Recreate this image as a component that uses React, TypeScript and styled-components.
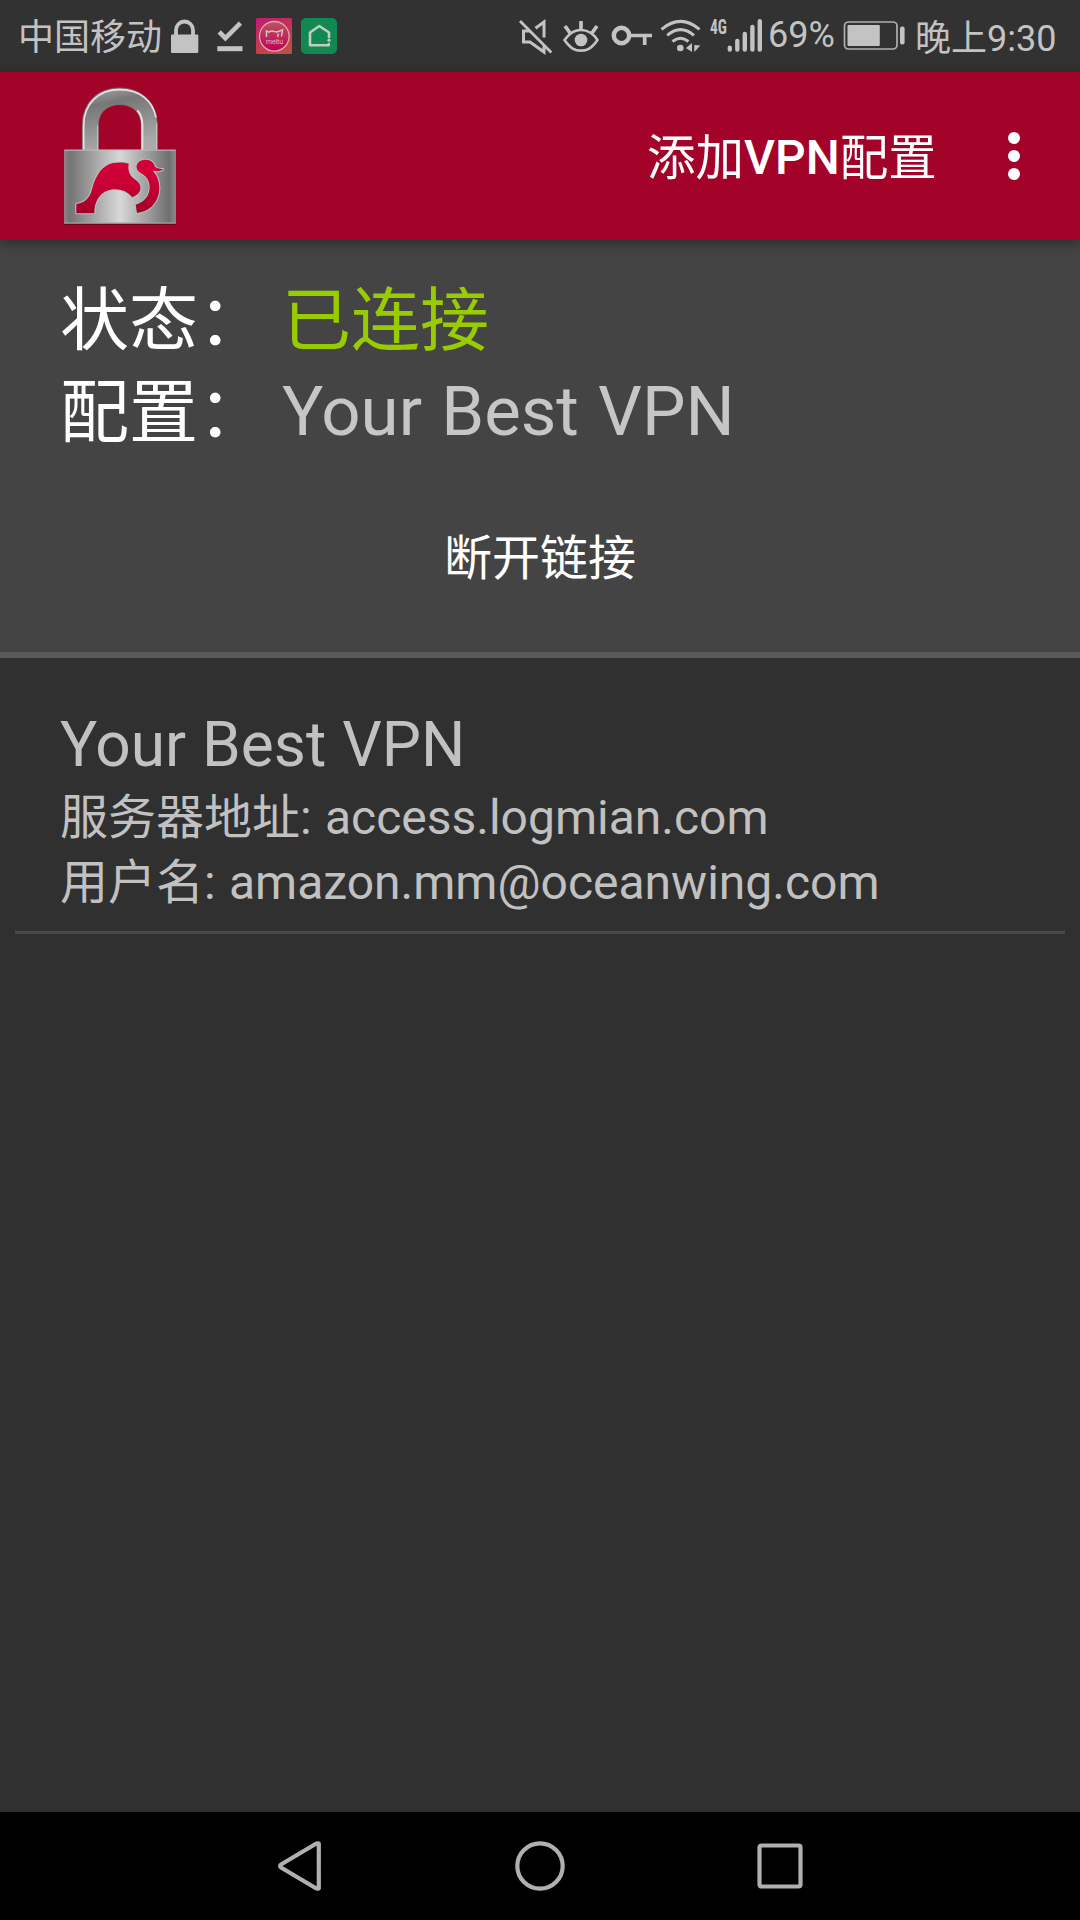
import React from "react";
import styled, { createGlobalStyle } from "styled-components";

const GlobalStyle = createGlobalStyle`
  * { box-sizing: border-box; }
  body {
    margin: 0;
    background: #303030;
    font-family: Roboto, "Noto Sans CJK SC", sans-serif;
  }
`;

const Screen = styled.div`
  width: 1080px;
  height: 1920px;
  display: flex;
  flex-direction: column;
  background: #303030;
  overflow: hidden;
`;

const StatusBar = styled.header`
  height: 72px;
  flex: none;
  display: flex;
  align-items: flex-start;
  background: #323232;
  color: #c3c3c3;
`;

const StatusText = styled.span<{ $w: number; $left: number; $top: number; $size: number }>`
  flex: none;
  width: ${(p) => p.$w}px;
  margin-left: ${(p) => p.$left}px;
  margin-top: ${(p) => p.$top}px;
  font-size: ${(p) => p.$size}px;
  line-height: 42px;
  white-space: nowrap;
`;

const NetworkLabel = styled.span`
  flex: none;
  width: 17px;
  margin: 17px 0 0 8px;
  font: 700 21px/20px "Roboto Condensed", Roboto, sans-serif;
  white-space: nowrap;
  transform: scaleX(0.74);
  transform-origin: left;
`;

const Glyph = styled.svg<{ $left?: number; $top?: number }>`
  flex: none;
  display: block;
  margin-left: ${(p) => p.$left ?? 0}px;
  margin-top: ${(p) => p.$top ?? 0}px;
`;

const AppBar = styled.div`
  height: 168px;
  flex: none;
  display: flex;
  align-items: flex-start;
  background: #a30229;
  box-shadow: 0 3px 12px rgba(0, 0, 0, 0.38);
  z-index: 1;
  color: #fff;
`;

const AddAction = styled.button`
  margin: 58px 0 0 auto;
  width: 289px;
  padding: 0;
  border: 0;
  background: none;
  color: inherit;
  font: 500 48px/56px Roboto, "Noto Sans CJK SC", sans-serif;
  text-align: left;
  white-space: nowrap;
`;

const Cjk = styled.span`
  font-weight: 400;
  font-size: 48.5px;
  line-height: 40px;
  vertical-align: -1px;
`;

const MoreButton = styled.button`
  width: 144px;
  height: 168px;
  padding: 0 0 0 12px;
  border: 0;
  background: none;
  display: flex;
  flex-direction: column;
  align-items: center;
  justify-content: center;
  gap: 6px;
`;

const Dot = styled.i`
  width: 12px;
  height: 12px;
  border-radius: 50%;
  background: #fff;
`;

const StatusPanel = styled.section`
  height: 418px;
  flex: none;
  padding-top: 36px;
  background: #444;
  border-bottom: 6px solid #5a5a5a;
`;

const StatusRow = styled.div`
  display: grid;
  grid-template-columns: 222px 1fr;
  padding-left: 60px;
  font-size: 69px;
  line-height: 92px;
  color: #fff;
  white-space: nowrap;
`;

const StatusValue = styled.span<{ $connected?: boolean }>`
  color: ${(p) => (p.$connected ? "#99cc00" : "#c6c6c6")};
  line-height: ${(p) => (p.$connected ? 92 : 88)}px;
  word-spacing: 2px;
`;

const DisconnectButton = styled.button`
  display: block;
  width: 960px;
  height: 144px;
  margin: 27px auto 0;
  padding: 0;
  border: 0;
  background: none;
  color: #fff;
  font: 400 48px/144px Roboto, "Noto Sans CJK SC", sans-serif;
`;

const ProfileList = styled.main`
  flex: 1;
  padding: 48px 15px 0;
`;

const Profile = styled.article`
  height: 228px;
  padding: 0 45px;
  border-bottom: 3px solid #484848;
  color: #c1c1c1;
`;

const ProfileName = styled.h2`
  margin: 0 0 1px;
  font-size: 62.2px;
  font-weight: 400;
  line-height: 78px;
  word-spacing: 0.5px;
  white-space: nowrap;
`;

const ProfileLine = styled.p`
  margin: 0;
  font-size: 48px;
  line-height: 65px;
  word-spacing: 1.4px;
  white-space: nowrap;
`;

const NavBar = styled.nav`
  height: 108px;
  flex: none;
  display: flex;
  justify-content: center;
  align-items: center;
  gap: 180px;
  background: #000;
`;

const NavButton = styled.button`
  width: 60px;
  height: 60px;
  padding: 0;
  border: 0;
  background: none;
`;

function PadlockLogo() {
  return (
    <Glyph $left={60} $top={13} width="120" height="140" viewBox="60 45 360 420">
      <defs>
        <linearGradient id="body" x1="0" x2="1">
          <stop offset="0" stopColor="#858585" />
          <stop offset=".05" stopColor="#747474" />
          <stop offset=".5" stopColor="#d8d8d8" />
          <stop offset=".94" stopColor="#707070" />
          <stop offset="1" stopColor="#8a8a8a" />
        </linearGradient>
        <linearGradient id="shackle" x1="0" y1="0" x2="0.25" y2="1">
          <stop offset="0" stopColor="#aaa" />
          <stop offset=".3" stopColor="#777" />
          <stop offset="1" stopColor="#aaa" />
        </linearGradient>
        <linearGradient id="camel" x1="0" y1="265" x2="0" y2="432" gradientUnits="userSpaceOnUse">
          <stop offset="0" stopColor="#d60038" />
          <stop offset=".45" stopColor="#cb0034" />
          <stop offset="1" stopColor="#a00027" />
        </linearGradient>
      </defs>
      <path d="M127 242V166C127 98 173 54 239 54S352 98 352 166V242H304V166C304 128 278 104 239 104S175 128 175 166V242Z" fill="url(#shackle)" stroke="#777" strokeWidth="2" />
      <path d="M131 240V166C131 101 176 59 239 59C298 59 338 91 348 143" fill="none" stroke="#e4e4e4" strokeWidth="5" />
      <path d="M307 240V166C307 148 302 132 292 121" fill="none" stroke="#e2e2e2" strokeWidth="6" />
      <path d="M350 240V160M173 240V166" fill="none" stroke="#c8c8c8" strokeWidth="3" />
      <rect x="73" y="239" width="334" height="222" fill="url(#body)" />
      <path d="M73 240.500H407" stroke="#bdbdbd" strokeWidth="3" />
      <path d="M74 240V460M406 240V460" stroke="#999" strokeWidth="2" />
      <path d="M73 459.500H407" stroke="#a8a8a8" strokeWidth="4" />
      <path d="M73 463H408" stroke="#650019" strokeWidth="3" />
      <g fill="url(#camel)" stroke="#b0c4c0" strokeWidth="6" strokeLinejoin="round" paintOrder="stroke">
        <path d="M109 402C137 398 152 380 157 354C168 312 190 284 220 279C237 276 253 277 266 281C263 301 268 316 284 328C299 338 303 347 301 358C300 369 290 376 277 382C264 366 247 358 225 358C188 358 163 386 163 430H109Z" />
        <path d="M290 287C292 275 304 268 319 269C335 270 343 280 345 291C353 296 361 297 369 297C366 303 355 305 338 302C349 313 358 331 358 352C358 396 331 425 291 429L287 404C313 397 329 376 329 351C329 335 321 321 307 312C296 305 288 298 290 287Z" />
      </g>
    </Glyph>
  );
}

function StatusIconsLeft() {
  return (
    <>
      <Glyph $left={7} $top={19} width="30" height="36" viewBox="170 19 30 36">
        <path d="M176 36V30a8.500 8.500 0 0 1 17 0v6" fill="none" stroke="#c3c3c3" strokeWidth="3.800" />
        <rect x="171" y="34.500" width="27.300" height="18.500" rx="1" fill="#c3c3c3" />
      </Glyph>
      <Glyph $left={16} $top={20} width="28" height="34" viewBox="216 20 28 34">
        <path d="M219.200 31.800L225.400 38.200L240.400 23.200" fill="none" stroke="#c3c3c3" strokeWidth="4.600" />
        <path d="M217.300 48.700H242.500" stroke="#c3c3c3" strokeWidth="5" />
      </Glyph>
      <Glyph $left={12} $top={18} width="36" height="36" viewBox="0 0 36 36">
        <defs>
          <linearGradient id="meitu" x1="0" y1="0" x2=".45" y2="1">
            <stop offset="0" stopColor="#c31a75" />
            <stop offset=".5" stopColor="#c63158" />
            <stop offset="1" stopColor="#c44a45" />
          </linearGradient>
          <linearGradient id="meituDisc" x1="0" y1="0" x2="0" y2="1">
            <stop offset="0" stopColor="#bd5360" />
            <stop offset="1" stopColor="#c40057" />
          </linearGradient>
        </defs>
        <rect width="36" height="36" rx="1.500" fill="url(#meitu)" />
        <circle cx="18.300" cy="18.300" r="14.800" fill="url(#meituDisc)" stroke="#d3aeb6" strokeWidth="1.300" />
        <path d="M10.500 19V13L13 14.200Q15 12.200 18 13.500L21 14L26.500 12L25.500 18.500M21.500 19L22.500 15.500" fill="none" stroke="#d0c4c7" strokeWidth="1.500" />
        <text x="18.500" y="25.800" fill="#d0bcc4" fontFamily="Roboto" fontSize="7" textAnchor="middle" textLength="17">meitu</text>
      </Glyph>
      <Glyph $left={9} $top={18} width="36" height="36" viewBox="0 0 36 36">
        <rect width="36" height="36" rx="5" fill="#128952" />
        <path d="M28 19V14.500L18.300 8L9 14.500V27.300H27.800V26" fill="none" stroke="#c4cbbf" strokeWidth="2.600" strokeLinejoin="round" strokeLinecap="round" />
        <circle cx="28" cy="22.200" r="1.600" fill="#c4cbbf" />
      </Glyph>
    </>
  );
}

function StatusIconsRight() {
  return (
    <>
      <Glyph $left={181} $top={18} width="36" height="38" viewBox="518 18 36 38" fill="none" stroke="#c3c3c3">
        <path d="M520 21L551.300 52.500" strokeWidth="2.800" />
        <path d="M535.500 28.300L544 22V37.500M544 45.500V52L530 42H523.500V31H530" strokeWidth="3" />
      </Glyph>
      <Glyph $left={8} $top={20} width="38" height="34" viewBox="562 20 38 34" fill="none" stroke="#c3c3c3" strokeWidth="2.700">
        <path d="M564.500 40C571 31.700 575.500 30 581 30S592 31.700 597.500 40C591.500 48.500 587 50.700 581 50.700S570.500 48.500 564.500 40Z" strokeLinejoin="round" />
        <circle cx="581" cy="40" r="6.300" fill="#c3c3c3" stroke="none" />
        <path d="M581 21V30M565 26L570 33M597 26L592 33" strokeWidth="3.700" />
      </Glyph>
      <Glyph $left={11} $top={24} width="42" height="24" viewBox="610 24 42 24" fill="none" stroke="#c3c3c3">
        <circle cx="620.500" cy="35.500" r="7.700" strokeWidth="4.500" />
        <path d="M628 35.500H651M643.700 36V45" strokeWidth="3.700" />
      </Glyph>
      <Glyph $left={7} $top={18} width="42" height="36" viewBox="660 18 42 36" fill="none" stroke="#c3c3c3" strokeWidth="3">
        <path d="M661.500 29.300Q680.500 13.500 699.500 29.300M667.200 35.300Q680.500 24 694 35.300M672.500 41.500Q680.500 35 688.500 41.500" />
        <circle cx="680.300" cy="48" r="3.300" fill="#c3c3c3" stroke="none" />
        <path d="M692 43V52L686 48ZM694.300 45V52L700.300 45.500Z" fill="#c3c3c3" stroke="none" />
      </Glyph>
      <NetworkLabel>4G</NetworkLabel>
      <Glyph $top={18} width="36" height="36" viewBox="727 18 36 36" stroke="#c3c3c3" strokeWidth="4.400" strokeLinecap="round">
        <path d="M729.800 47.800V49.600M737.300 41V49.600M744.800 34V49.600M752.400 27V49.600M759.800 21.200V49.600" />
      </Glyph>
    </>
  );
}

function BatteryIcon() {
  return (
    <Glyph $left={9} $top={20} width="62" height="31" viewBox="843 20 62 31">
      <rect x="844.500" y="22" width="52.500" height="27" rx="4" fill="none" stroke="#b0b0b0" strokeWidth="1.700" />
      <rect x="847.500" y="25" width="32.300" height="21" rx="1" fill="#c3c3c3" />
      <rect x="900" y="26.500" width="4.600" height="18" rx="2" fill="#c3c3c3" />
    </Glyph>
  );
}

export default function App() {
  return (
    <Screen lang="zh-CN">
      <GlobalStyle />
      <StatusBar>
        <StatusText $w={145} $left={18} $top={17} $size={36}>中国移动</StatusText>
        <StatusIconsLeft />
        <StatusIconsRight />
        <StatusText $w={66} $left={5} $top={14} $size={36}>69%</StatusText>
        <BatteryIcon />
        <StatusText $w={145} $left={10} $top={18} $size={36}>晚上9:30</StatusText>
      </StatusBar>

      <AppBar>
        <PadlockLogo />
        <AddAction><Cjk>添加</Cjk>VPN<Cjk>配置</Cjk></AddAction>
        <MoreButton aria-label="更多">
          <Dot /><Dot /><Dot />
        </MoreButton>
      </AppBar>

      <StatusPanel>
        <StatusRow><span>状态：</span><StatusValue $connected>已连接</StatusValue></StatusRow>
        <StatusRow><span>配置：</span><StatusValue>Your Best VPN</StatusValue></StatusRow>
        <DisconnectButton>断开链接</DisconnectButton>
      </StatusPanel>

      <ProfileList>
        <Profile>
          <ProfileName>Your Best VPN</ProfileName>
          <ProfileLine>服务器地址: access.logmian.com</ProfileLine>
          <ProfileLine>用户名: amazon.mm@oceanwing.com</ProfileLine>
        </Profile>
      </ProfileList>

      <NavBar>
        <NavButton aria-label="返回">
          <Glyph width="60" height="60" viewBox="270 1836 60 60" fill="none" stroke="#b0b0b0" strokeWidth="4.200" strokeLinejoin="round">
            <path d="M318.800 1843.500V1888.500Q317 1889 315.500 1888L281 1867.500Q279.500 1866 281 1864.500L315.500 1844Q317 1843 318.800 1843.500Z" />
          </Glyph>
        </NavButton>
        <NavButton aria-label="主页">
          <Glyph width="60" height="60" viewBox="0 0 60 60">
            <circle cx="30" cy="30" r="22.700" fill="none" stroke="#b0b0b0" strokeWidth="4.200" />
          </Glyph>
        </NavButton>
        <NavButton aria-label="最近">
          <Glyph width="60" height="60" viewBox="0 0 60 60">
            <rect x="9.500" y="9.500" width="41" height="41" rx="2" fill="none" stroke="#b0b0b0" strokeWidth="4.200" />
          </Glyph>
        </NavButton>
      </NavBar>
    </Screen>
  );
}
